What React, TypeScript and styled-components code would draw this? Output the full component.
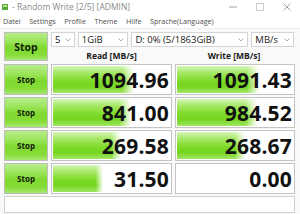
import React from 'react';
import styled, { createGlobalStyle } from 'styled-components';

const GlobalStyle = createGlobalStyle`
  html, body {
    margin: 0;
    padding: 0;
    background: #ffffff;
  }
  body {
    font-family: "Open Sans", "Noto Sans", "Liberation Sans", sans-serif;
  }
`;

const Window = styled.div`
  width: 300px;
  height: 214px;
  background: #f9f9f9;
  display: flex;
  flex-direction: column;
  overflow: hidden;
`;

const TitleBar = styled.div`
  height: 13px;
  display: flex;
  align-items: center;
  background: #ffffff;
  padding-left: 2px;
`;

const TitleText = styled.span`
  font-size: 8.5px;
  color: #8a8a8a;
  margin-left: 3px;
  flex: 1;
`;

const WinButton = styled.span`
  width: 27px;
  display: flex;
  justify-content: center;
  align-items: center;
`;

const MenuBar = styled.div`
  height: 15px;
  display: flex;
  align-items: center;
  background: #ffffff;
  padding-left: 3px;
  gap: 8.5px;
  border-bottom: 1px solid #f0f0f0;
`;

const MenuItem = styled.span`
  font-size: 7.2px;
  color: #505050;
`;

const Main = styled.div`
  display: grid;
  grid-template-columns: 44px 121px 120px;
  grid-template-rows: 30px repeat(4, 31px) 17px;
  column-gap: 3px;
  row-gap: 2px;
  padding: 3px 4px 0 4px;
`;

const TopRight = styled.div`
  grid-column: 2 / 4;
  display: grid;
  grid-template-columns: 121px 120px;
  column-gap: 2px;
  grid-template-rows: 18px 12px;
`;

const Combos = styled.div`
  grid-column: 1 / 3;
  display: flex;
  gap: 3px;
`;

const Combo = styled.div<{ $w: number }>`
  width: ${p => p.$w}px;
  height: 15px;
  box-sizing: border-box;
  border: 1px solid #d4d4d4;
  background: #ffffff;
  display: flex;
  align-items: center;
  padding-left: 3px;
  font-size: 9.5px;
  color: #202020;
`;

const ComboLabel = styled.span`
  flex: 1;
  white-space: nowrap;
`;

const Chevron = styled.svg`
  width: 6px;
  height: 4px;
  margin-right: 3px;
`;

const Header = styled.div`
  font-size: 8.5px;
  font-weight: 700;
  color: #202020;
  text-align: center;
  line-height: 12px;
`;

const StopButton = styled.div<{ $big?: boolean }>`
  box-sizing: border-box;
  height: ${p => (p.$big ? 29 : 31)}px;
  border: 1px solid #bdbdbd;
  background: linear-gradient(
    to bottom,
    #b8ee8a 0%,
    #9be55c 30%,
    #7fd92e 55%,
    #86dc38 80%,
    #a6e870 100%
  );
  display: flex;
  align-items: center;
  justify-content: center;
  font-weight: 700;
  font-size: ${p => (p.$big ? 10.5 : 8)}px;
  color: #14200c;
`;

const Cell = styled.div`
  box-sizing: border-box;
  height: 31px;
  border: 1px solid #c4c4c4;
  background: #ffffff;
  position: relative;
  display: flex;
  align-items: center;
  justify-content: flex-end;
  overflow: hidden;
`;

const Bar = styled.div`
  position: absolute;
  left: 1px;
  top: 1px;
  bottom: 1px;
  background:
    linear-gradient(to right, rgba(255, 255, 255, 0) 85%, rgba(255, 255, 255, 1) 100%),
    linear-gradient(
      to bottom,
      #d6f6ba 0%,
      #a6e866 25%,
      #7fdb2a 55%,
      #74d51e 75%,
      #a2e664 100%
    );
`;

const Value = styled.span`
  position: relative;
  font-family: "Open Sans", "Noto Sans", sans-serif;
  font-weight: 700;
  font-size: 21px;
  letter-spacing: 0.2px;
  color: #111111;
  padding-right: 2px;
`;

const Comment = styled.div`
  grid-column: 1 / 4;
  box-sizing: border-box;
  height: 17px;
  border: 1px solid #cfcfcf;
  background: #ffffff;
`;

const rows = [
  { read: '1094.96', write: '1091.43', rw: 81, ww: 82 },
  { read: '841.00', write: '984.52', rw: 78, ww: 80 },
  { read: '269.58', write: '268.67', rw: 68, ww: 68 },
  { read: '31.50', write: '0.00', rw: 50, ww: 0 },
];

const ChevronIcon = () => (
  <Chevron viewBox="0 0 6 4">
    <path d="M0.5 0.5 L3 3 L5.5 0.5" fill="none" stroke="#9a9a9a" strokeWidth="0.8" />
  </Chevron>
);

const App: React.FC = () => {
  return (
    <>
      <GlobalStyle />
      <Window>
        <TitleBar>
          <svg width="7" height="8" viewBox="0 0 7 8">
            <rect x="0" y="1" width="6" height="6" fill="#5aa83a" />
            <rect x="1" y="2" width="4" height="2" fill="#b5e38f" />
          </svg>
          <TitleText>- Random Write [2/5] [ADMIN]</TitleText>
          <WinButton>
            <svg width="8" height="8" viewBox="0 0 8 8">
              <path d="M0 4 H8" stroke="#8a8a8a" strokeWidth="0.8" />
            </svg>
          </WinButton>
          <WinButton>
            <svg width="8" height="8" viewBox="0 0 8 8">
              <rect x="0.5" y="0.5" width="7" height="7" fill="none" stroke="#c4c4c4" strokeWidth="0.8" />
            </svg>
          </WinButton>
          <WinButton>
            <svg width="8" height="8" viewBox="0 0 8 8">
              <path d="M0.5 0.5 L7.5 7.5 M7.5 0.5 L0.5 7.5" stroke="#8a8a8a" strokeWidth="0.8" />
            </svg>
          </WinButton>
        </TitleBar>
        <MenuBar>
          <MenuItem>Datei</MenuItem>
          <MenuItem>Settings</MenuItem>
          <MenuItem>Profile</MenuItem>
          <MenuItem>Theme</MenuItem>
          <MenuItem>Hilfe</MenuItem>
          <MenuItem>Sprache(Language)</MenuItem>
        </MenuBar>
        <Main>
          <StopButton $big>Stop</StopButton>
          <TopRight>
            <Combos>
              <Combo $w={24}>
                <ComboLabel>5</ComboLabel>
                <ChevronIcon />
              </Combo>
              <Combo $w={51}>
                <ComboLabel>1GiB</ComboLabel>
                <ChevronIcon />
              </Combo>
              <Combo $w={118}>
                <ComboLabel>D: 0% (5/1863GiB)</ComboLabel>
                <ChevronIcon />
              </Combo>
              <Combo $w={43}>
                <ComboLabel>MB/s</ComboLabel>
                <ChevronIcon />
              </Combo>
            </Combos>
            <Header>Read [MB/s]</Header>
            <Header>Write [MB/s]</Header>
          </TopRight>
          {rows.map((r, i) => (
            <React.Fragment key={i}>
              <StopButton>Stop</StopButton>
              <Cell>
                {r.rw > 0 && <Bar style={{ width: r.rw }} />}
                <Value>{r.read}</Value>
              </Cell>
              <Cell>
                {r.ww > 0 && <Bar style={{ width: r.ww }} />}
                <Value>{r.write}</Value>
              </Cell>
            </React.Fragment>
          ))}
          <Comment />
        </Main>
      </Window>
    </>
  );
};

export default App;
